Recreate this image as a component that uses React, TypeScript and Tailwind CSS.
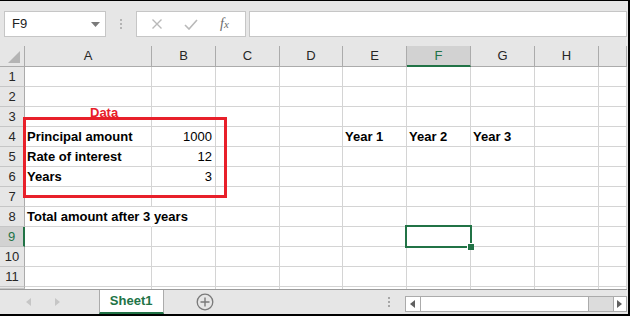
import React from 'react';

const COLS = ['A', 'B', 'C', 'D', 'E', 'F', 'G', 'H', ''];

type Cell = { text: string; bold?: boolean; right?: boolean; overflow?: boolean };

// row number -> column letter -> cell
const data: Record<number, Record<string, Cell>> = {
  4: {
    A: { text: 'Principal amount', bold: true },
    B: { text: '1000', right: true },
    E: { text: 'Year 1', bold: true },
    F: { text: 'Year 2', bold: true },
    G: { text: 'Year 3', bold: true },
  },
  5: {
    A: { text: 'Rate of interest', bold: true },
    B: { text: '12', right: true },
  },
  6: {
    A: { text: 'Years', bold: true },
    B: { text: '3', right: true },
  },
  8: {
    A: { text: 'Total amount after 3 years', bold: true, overflow: true },
  },
};

const SEL_COL = 'F';
const SEL_ROW = 9;

const FormulaBar: React.FC = () => (
  <div className="h-[45px] flex items-start pt-[10px] pl-[4px]">
    <div className="w-[102px] h-[26px] bg-white border border-[#c6c6c6] flex items-center justify-between pl-[7px] pr-[5px]">
      <span className="text-[13px] text-[#222]">F9</span>
      <svg width="9" height="5" viewBox="0 0 9 5">
        <path d="M0 0 L9 0 L4.5 5 Z" fill="#7a7a7a" />
      </svg>
    </div>
    <div className="w-[30px] h-[26px] flex flex-col items-center justify-center gap-[2px]">
      <span className="w-[2px] h-[2px] bg-[#b4b4b4]" />
      <span className="w-[2px] h-[2px] bg-[#b4b4b4]" />
      <span className="w-[2px] h-[2px] bg-[#b4b4b4]" />
    </div>
    <div className="w-[110px] h-[26px] bg-white border border-[#c6c6c6] flex items-center">
      <svg width="12" height="12" viewBox="0 0 12 12" className="ml-[14px]">
        <path d="M1.5 1.5 L10.5 10.5 M10.5 1.5 L1.5 10.5" stroke="#b9b9b9" strokeWidth="1.4" />
      </svg>
      <svg width="14" height="11" viewBox="0 0 14 11" className="ml-[21px]">
        <path d="M1 6 L5 10 L13 1" stroke="#b9b9b9" strokeWidth="1.6" fill="none" />
      </svg>
      <span className="ml-[22px] font-['Liberation_Serif',serif] italic text-[14px] text-[#6a6a6a] leading-none">
        f<span className="text-[11px]">x</span>
      </span>
    </div>
    <div className="ml-[3px] w-[378px] h-[26px] bg-white border border-[#c6c6c6]" />
  </div>
);

const Grid: React.FC = () => (
  <div className="relative w-[627px] h-[243px] overflow-hidden">
    <div className="grid grid-cols-[25px_127px_64px_64px_63px_64px_64px_64px_64px_28px] grid-rows-[21px_repeat(11,20px)_2px]">
      {/* select-all corner */}
      <div className="bg-[#e6e6e6] border-r border-b border-[#ababab] flex items-end justify-end pr-[4px] pb-[3px]">
        <svg width="12" height="12" viewBox="0 0 12 12">
          <path d="M12 0 L12 12 L0 12 Z" fill="#b4b4b4" />
        </svg>
      </div>
      {COLS.map((c, i) => (
        <div
          key={c + i}
          className={
            c === SEL_COL
              ? 'bg-[#d2d2d2] border-r border-[#ababab] border-b-2 border-b-[#217346] flex items-center justify-center text-[13px] text-[#217346]'
              : 'bg-[#e6e6e6] border-r border-b border-[#ababab] flex items-center justify-center text-[13px] text-[#262626]'
          }
        >
          {c}
        </div>
      ))}
      {Array.from({ length: 12 }, (_, r) => r + 1).map((row) => (
        <React.Fragment key={row}>
          <div
            className={
              row === SEL_ROW
                ? 'bg-[#d2d2d2] border-r-2 border-r-[#217346] border-b border-b-[#c6c6c6] flex items-center justify-center text-[13px] text-[#217346]'
                : 'bg-[#e6e6e6] border-r border-r-[#ababab] border-b border-b-[#c6c6c6] flex items-center justify-center text-[13px] text-[#262626]'
            }
          >
            {row <= 11 ? row : ''}
          </div>
          {COLS.map((c, i) => {
            const cell = data[row]?.[c];
            return (
              <div
                key={c + i}
                className={
                  'bg-white border-b border-[#d4d4d4] flex items-end pb-[2px] text-[13px] leading-[15px] text-black whitespace-nowrap ' +
                  (cell?.overflow ? 'border-r border-r-white overflow-visible relative z-10 ' : 'border-r overflow-hidden ') +
                  (cell?.right ? 'justify-end pr-[3px] ' : 'pl-[2px] ') +
                  (cell?.bold ? 'font-bold' : '')
                }
              >
                {cell?.text}
              </div>
            );
          })}
        </React.Fragment>
      ))}
    </div>

    {/* annotation overlay */}
    <span className="absolute left-[90px] top-[60px] text-[13px] leading-[13px] font-bold text-[#e8202a]">
      Data
    </span>
    <div className="absolute left-[23px] top-[71px] w-[204px] h-[81px] border-[3px] border-[#e8202a]" />

    {/* active cell */}
    <div className="absolute left-[405px] top-[179px] w-[67px] h-[23px] border-2 border-[#217346]" />
    <div className="absolute left-[467px] top-[197px] w-[7px] h-[7px] bg-[#217346] border-l border-t border-white" />
  </div>
);

const TabBar: React.FC = () => (
  <div className="h-[25px] w-[627px] border-t border-[#9c9c9c] flex items-start">
    <div className="w-[99px] h-[24px] flex items-center">
      <svg width="5" height="8" viewBox="0 0 5 8" className="ml-[26px]">
        <path d="M5 0 L5 8 L0 4 Z" fill="#c6c6c6" />
      </svg>
      <svg width="5" height="8" viewBox="0 0 5 8" className="ml-[24px]">
        <path d="M0 0 L0 8 L5 4 Z" fill="#c6c6c6" />
      </svg>
    </div>
    <div className="w-[65px] h-[24px] bg-white border-x border-[#ababab] border-b-2 border-b-[#217346] flex items-center justify-center text-[13px] font-bold text-[#217346]">
      Sheet1
    </div>
    <div className="ml-[32px] h-[24px] flex items-center">
      <svg width="18" height="18" viewBox="0 0 18 18">
        <circle cx="9" cy="9" r="7.8" stroke="#7a7a7a" strokeWidth="1.3" fill="none" />
        <path d="M9 4.5 V13.5 M4.5 9 H13.5" stroke="#7a7a7a" strokeWidth="1.4" />
      </svg>
    </div>
    <div className="ml-[174px] h-[24px] flex flex-col items-center justify-center gap-[2px]">
      <span className="w-[2px] h-[2px] bg-[#a6a6a6]" />
      <span className="w-[2px] h-[2px] bg-[#a6a6a6]" />
      <span className="w-[2px] h-[2px] bg-[#a6a6a6]" />
    </div>
    <div className="ml-[15px] mt-[6px] w-[223px] h-[16px] border border-[#ababab] flex bg-white">
      <div className="w-[15px] h-full border-r border-[#ababab] flex items-center justify-center">
        <svg width="5" height="8" viewBox="0 0 5 8">
          <path d="M5 0 L5 8 L0 4 Z" fill="#606060" />
        </svg>
      </div>
      <div className="w-[168px] h-full border-r border-[#ababab] bg-white" />
      <div className="w-[24px] h-full bg-[#dcdcdc]" />
      <div className="flex-1 h-full border-l border-[#ababab] flex items-center justify-center">
        <svg width="5" height="8" viewBox="0 0 5 8">
          <path d="M0 0 L0 8 L5 4 Z" fill="#606060" />
        </svg>
      </div>
    </div>
  </div>
);

export default function App() {
  return (
    <div className="w-[630px] h-[316px] bg-[#e6e6e6] border-t border-r-2 border-b-2 border-black flex flex-col overflow-hidden font-['Liberation_Sans',Arial,sans-serif]">
      <FormulaBar />
      <Grid />
      <TabBar />
    </div>
  );
}
